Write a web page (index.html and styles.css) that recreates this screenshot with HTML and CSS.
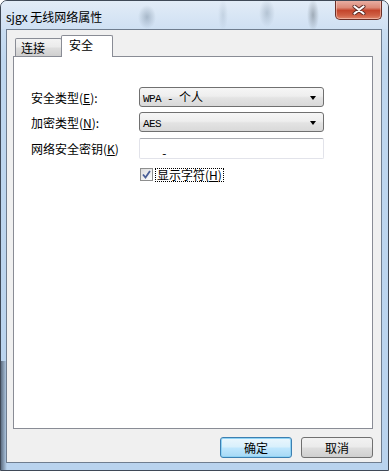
FILE: index.html
```html
<!DOCTYPE html>
<html lang="zh-CN">
<head>
    <meta charset="UTF-8">
    <title>sjgx 无线网络属性</title>
    <link rel="stylesheet" href="styles.css">
</head>
<body>

<div class="window">
    <div class="titlebar">
        <span class="title">sjgx 无线网络属性</span>
        <div class="close-btn">
            <svg width="14" height="10" viewBox="0 0 14 10">
                <path d="M2.5 1.5 L11.5 8.5 M11.5 1.5 L2.5 8.5" stroke="#5b2b26" stroke-width="4" stroke-linecap="round"/>
                <path d="M2.5 1.5 L11.5 8.5 M11.5 1.5 L2.5 8.5" stroke="#ffffff" stroke-width="2.2" stroke-linecap="round"/>
            </svg>
        </div>
    </div>

    <div class="client">
        <div class="tabs">
            <div class="tab">连接</div>
            <div class="tab active">安全</div>
        </div>

        <div class="panel">
            <div class="row first">
                <label class="label">安全类型(<u>E</u>):</label>
                <div class="combo"><span class="mono">WPA - </span>个人<span class="arrow"></span></div>
            </div>
            <div class="row second">
                <label class="label">加密类型(<u>N</u>):</label>
                <div class="combo"><span class="mono">AES</span><span class="arrow"></span></div>
            </div>
            <div class="row third">
                <label class="label">网络安全密钥(<u>K</u>)</label>
                <div class="textbox"><span class="mono dash">-</span></div>
            </div>
            <div class="check-row">
                <span class="checkbox">
                    <svg width="9" height="9" viewBox="0 0 9 9">
                        <path d="M1 4.5 L3.5 7.5 L8 1" fill="none" stroke="#4a5f97" stroke-width="1.8"/>
                    </svg>
                </span>
                <span class="check-label">显示字符(<u>H</u>)</span>
            </div>
        </div>

        <div class="buttons">
            <button class="btn default">确定</button>
            <button class="btn">取消</button>
        </div>
    </div>
</div>

</body>
</html>
```

FILE: styles.css
```css
* {
    box-sizing: border-box;
}

body {
    margin: 0;
    background: #ffffff;
    font-family: "Noto Sans CJK SC", "Liberation Sans", sans-serif;
    font-size: 12px;
    color: #000000;
}

.window {
    position: relative;
    width: 389px;
    height: 471px;
    border: 1px solid #3f4957;
    border-radius: 7px 7px 0 0;
    overflow: hidden;
    background:
        linear-gradient(90deg, rgba(20, 30, 45, 0.55) 0, rgba(20, 30, 45, 0) 6px) 0 360px / 8px 110px no-repeat,
        linear-gradient(#d3e3f4, #bfd7ef 60px, #b9d3ee);
}

.titlebar {
    height: 28px;
    display: flex;
    align-items: center;
    padding-left: 5px;
    background:
        radial-gradient(ellipse 9px 12px at 146px 16px, rgba(110, 130, 150, 0.45), rgba(110, 130, 150, 0)),
        radial-gradient(ellipse 8px 14px at 266px 12px, rgba(110, 130, 150, 0.35), rgba(110, 130, 150, 0)),
        radial-gradient(ellipse 6px 16px at 312px 14px, rgba(90, 100, 110, 0.45), rgba(90, 100, 110, 0)),
        radial-gradient(ellipse 5px 16px at 222px 14px, rgba(110, 130, 150, 0.2), rgba(110, 130, 150, 0)),
        linear-gradient(#e2ecf7, #cfe0f3);
}

.title {
    font-size: 12px;
    margin-top: 2px;
}

.close-btn {
    position: absolute;
    top: -1px;
    right: 6px;
    width: 47px;
    height: 20px;
    border: 1px solid #6b2f27;
    border-top: none;
    border-radius: 0 0 5px 5px;
    background: linear-gradient(#eab3a8, #dc8a78 40%, #c4452c 55%, #cf5f44 80%, #e0876c);
    box-shadow: inset 0 0 0 1px rgba(255, 220, 210, 0.5);
    display: flex;
    align-items: center;
    justify-content: center;
}

.client {
    width: 376px;
    height: 434px;
    margin-left: 5px;
    border: 1px solid #6f7d8f;
    background: #f0f0f0;
    padding: 5px 0 0 6px;
}

.tabs {
    display: flex;
    align-items: flex-end;
    height: 21px;
    padding-left: 2px;
}

.tab {
    width: 47px;
    height: 18px;
    border: 1px solid #898c95;
    border-bottom: none;
    border-radius: 2px 2px 0 0;
    background: linear-gradient(#f3f3f3, #ebebeb 45%, #dddddd 55%, #cfcfcf);
    padding-left: 5px;
    line-height: 17px;
    font-size: 12px;
}

.tab.active {
    position: relative;
    z-index: 1;
    width: 52px;
    height: 22px;
    margin-left: -1px;
    margin-bottom: -1px;
    background: #ffffff;
    padding-left: 7px;
    line-height: 18px;
}

.panel {
    width: 360px;
    height: 373px;
    border: 1px solid #898c95;
    background: #ffffff;
    padding: 30px 0 0 17px;
}

.row {
    display: flex;
    align-items: center;
}

.row.second {
    margin-top: 5px;
}

.row.third {
    margin-top: 6px;
}

.label {
    width: 108px;
    font-size: 12px;
}

.mono {
    font-family: "Liberation Mono", monospace;
    font-size: 11px;
    letter-spacing: -0.6px;
}

.mono.dash {
    vertical-align: -3px;
}

.combo {
    position: relative;
    width: 185px;
    height: 20px;
    border: 1px solid #707070;
    border-radius: 3px;
    background: linear-gradient(#f6f6f6, #eeeeee 45%, #e3e3e3 55%, #d9d9d9);
    padding-left: 3px;
    line-height: 18px;
    font-size: 12px;
}

.arrow {
    position: absolute;
    right: 7px;
    top: 8px;
    width: 0;
    height: 0;
    border-left: 3.5px solid transparent;
    border-right: 3.5px solid transparent;
    border-top: 4px solid #000000;
}

.textbox {
    width: 185px;
    height: 21px;
    border: 1px solid #e2e3ea;
    border-top-color: #abadb3;
    border-radius: 2px;
    background: #ffffff;
    padding-left: 21px;
    line-height: 20px;
}

.check-row {
    display: flex;
    align-items: center;
    margin-top: 9px;
    margin-left: 109px;
    height: 13px;
}

.checkbox {
    width: 13px;
    height: 13px;
    border: 1px solid #8e8f8f;
    background: linear-gradient(135deg, #dcdcdc, #ffffff);
    display: flex;
    align-items: center;
    justify-content: center;
}

.check-label {
    margin-left: 2px;
    border: 1px dotted #000000;
    padding: 0 1px;
    line-height: 12px;
    font-size: 12px;
}

.buttons {
    display: flex;
    justify-content: flex-end;
    gap: 9px;
    width: 360px;
    margin-top: 8px;
}

.btn {
    width: 72px;
    height: 21px;
    border: 1px solid #707070;
    border-radius: 3px;
    background: linear-gradient(#f2f2f2, #ebebeb 45%, #dddddd 55%, #cfcfcf);
    font-family: "Noto Sans CJK SC", sans-serif;
    font-size: 12px;
    padding: 0;
    line-height: 18px;
}

.btn.default {
    border-color: #3c7fb1;
    background: linear-gradient(#eaf6fd, #d9f0fc 45%, #bee6fd 55%, #a7d9f5);
    box-shadow: inset 0 0 0 1px #8fd3f5;
}
```
